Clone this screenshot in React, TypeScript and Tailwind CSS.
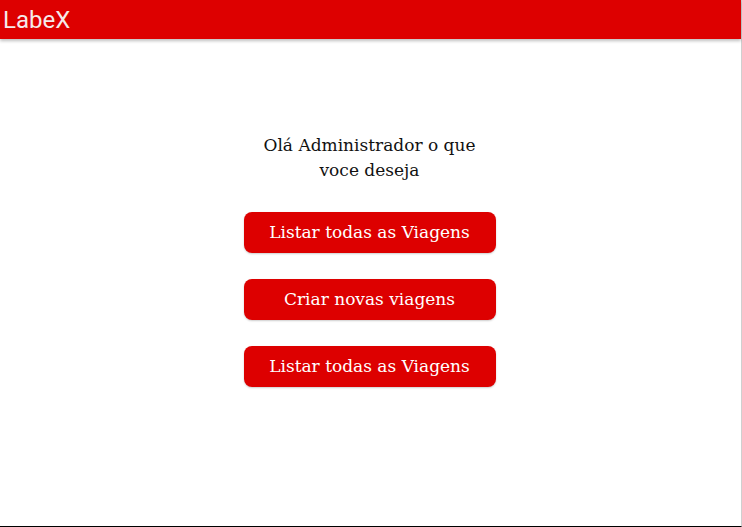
export default function App() {
  const buttons = ['Listar todas as Viagens', 'Criar novas viagens', 'Listar todas as Viagens'];

  return (
    <div className="w-[742px] h-[527px] flex flex-col bg-white overflow-hidden">
      <div className="flex-1 flex flex-col border-r border-b border-r-[#cfcfcf] border-b-black">
        <header className="h-[39px] bg-[#dd0000] flex items-center px-[3px] shadow-[0_2px_3px_rgba(0,0,0,0.25)] relative z-10">
          <span className="text-[24px] text-[#f5eaea] font-['Roboto',sans-serif] leading-none">LabeX</span>
        </header>

        <main className="flex-1 flex flex-col items-center pt-[94px] pr-[2px] font-['DejaVu_Serif',serif]">
          <div className="w-[252px] flex flex-col items-center">
            <h3 className="w-[240px] text-center text-[17px] leading-[25px] text-[#111]">
              Olá Administrador o que voce deseja
            </h3>
            <div className="mt-[29px] w-full flex flex-col gap-[26px]">
              {buttons.map((label, i) => (
                <button
                  key={i}
                  className="h-[41px] w-full rounded-[8px] bg-[#dd0000] text-white text-[17px] shadow-[0_1px_2px_rgba(0,0,0,0.2)]"
                >
                  {label}
                </button>
              ))}
            </div>
          </div>
        </main>
      </div>
    </div>
  );
}
